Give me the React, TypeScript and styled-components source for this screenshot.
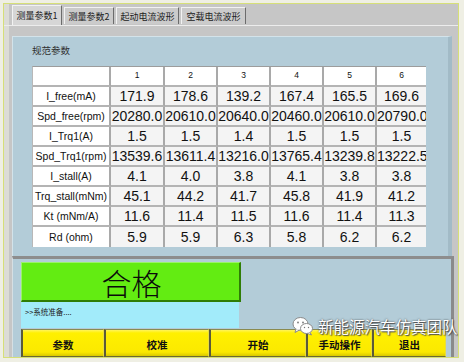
import styled, { createGlobalStyle } from "styled-components";

const GlobalStyle = createGlobalStyle`
  html, body {
    margin: 0;
    padding: 0;
    background: #efefe4;
  }
  body {
    width: 464px;
    height: 362px;
    overflow: hidden;
    font-family: "Liberation Sans", "Noto Sans CJK SC", sans-serif;
  }
`;

const Page = styled.div`
  position: relative;
  width: 464px;
  height: 362px;
  padding: 3px 0 0 3px;
  box-sizing: border-box;
`;

const Frame = styled.div`
  width: 456px;
  height: 355px;
  box-sizing: border-box;
  border: 1px solid #d6df78;
  background: linear-gradient(to right, #dcdcd6 0 5px, #c6c6c6 5px);
  display: flex;
  flex-direction: column;
`;

const TabBar = styled.div`
  height: 21px;
  padding-left: 8px;
  display: flex;
  align-items: flex-end;
  gap: 2px;
`;

const Tab = styled.div<{ $active?: boolean; $w: number }>`
  width: ${(p) => p.$w}px;
  height: ${(p) => (p.$active ? 20 : 17)}px;
  box-sizing: border-box;
  margin-bottom: ${(p) => (p.$active ? 0 : 1)}px;
  background: ${(p) => (p.$active ? "#d6d6d6" : "#cbcbcb")};
  border-top: 1px solid #f2f2f2;
  border-left: 1px solid #f2f2f2;
  border-right: 1px solid #6c6c6c;
  display: flex;
  align-items: center;
  justify-content: center;
  font-family: "Noto Sans CJK SC", sans-serif;
  font-size: 9px;
  color: #202020;
  white-space: nowrap;
`;

const TabBody = styled.div`
  border-top: 1px solid #ececec;
  padding: 10px 6px 0 8px;
`;

const BluePanel = styled.div`
  height: 220px;
  box-sizing: border-box;
  background: #b3ccd8;
  border-top: 1px solid #d3e3ea;
  border-left: 1px solid #d3e3ea;
  border-right: 4px solid #a2bbc7;
  padding: 6px 0 0 19px;
`;

const Caption = styled.div`
  font-family: "Noto Sans CJK SC", sans-serif;
  font-size: 9.5px;
  line-height: 14px;
  color: #303030;
  margin-bottom: 9px;
`;

const Grid = styled.div`
  display: grid;
  grid-template-columns: 78px 54px 53px 53px 53px 53px 49px;
  grid-template-rows: 20px repeat(8, 20px);
  width: 394px;
  box-sizing: border-box;
  border-top: 1px solid #9c9c9c;
  border-left: 1px solid #b8b8b8;
`;

const Cell = styled.div<{ $kind: "head" | "label" | "data"; $lastCol?: boolean; $lastRow?: boolean }>`
  box-sizing: border-box;
  overflow: hidden;
  white-space: nowrap;
  display: flex;
  align-items: ${(p) => (p.$kind === "head" ? "flex-start" : "center")};
  justify-content: safe center;
  padding-top: ${(p) => (p.$kind === "head" ? 3 : 0)}px;
  background: ${(p) => (p.$kind === "data" ? "#f4f4f4" : "#ffffff")};
  border-right: ${(p) => (p.$lastCol ? "none" : "2px solid #a9a9a9")};
  border-bottom: ${(p) => (p.$lastRow ? "none" : "2px solid #b4b4b4")};
  color: #111;
  font-size: ${(p) => (p.$kind === "data" ? 14 : p.$kind === "label" ? 10.5 : 8.5)}px;
`;

const LowerArea = styled.div`
  flex: 1;
  border-top: 3px solid #8d8d8d;
  margin-left: 8px;
  margin-right: 4px;
  background: #b3ccd8;
  border-left: 1px solid #d6dfe3;
  border-right: 3px solid #8a8a8a;
  padding: 3px 0 0 8px;
  display: flex;
  flex-direction: column;
  align-items: flex-start;
`;

const ResultBox = styled.div`
  width: 220px;
  height: 40px;
  box-sizing: border-box;
  background: #63ec12;
  border-top: 1px solid #9af36a;
  border-left: 1px solid #9af36a;
  border-right: 2px solid #2f7d06;
  border-bottom: 2px solid #2f7d06;
  display: flex;
  align-items: center;
  justify-content: center;
  font-family: "Noto Sans CJK SC", sans-serif;
  font-size: 30px;
  font-weight: 300;
  color: #0a0a0a;
  padding-left: 2px;
`;

const StatusBox = styled.div`
  width: 218px;
  height: 26px;
  box-sizing: border-box;
  background: #a2ebfa;
  padding: 5px 0 0 4px;
  font-family: "Noto Sans CJK SC", sans-serif;
  font-size: 7.5px;
  line-height: 10px;
  color: #222;
`;

const ButtonRow = styled.div`
  display: flex;
  margin-top: 1px;
  height: 28px;
`;

const Button = styled.div<{ $w: number }>`
  width: ${(p) => p.$w}px;
  box-sizing: border-box;
  background: linear-gradient(#fff45c 0, #fff000 3px, #fbe900 85%, #d9c800 100%);
  border-top: 1px solid #8a8a50;
  border-left: 2px solid #5a5a3a;
  border-right: 1px solid #e8dc40;
  border-bottom: 1px solid #6a6a30;
  display: flex;
  align-items: center;
  justify-content: center;
  padding-top: 3px;
  font-family: "Noto Sans CJK SC", sans-serif;
  font-size: 10.5px;
  font-weight: 700;
  color: #111;
`;

const Watermark = styled.div`
  position: absolute;
  left: 292px;
  top: 315px;
  display: flex;
  align-items: center;
  gap: 4px;
  font-family: "Noto Sans CJK SC", sans-serif;
  font-size: 15.5px;
  color: #ffffff;
  text-shadow: 0 0 2px #3a3a3a, 1px 1px 1px #555;
  white-space: nowrap;
`;

const tabs = [
  { label: "测量参数1", w: 50, active: true },
  { label: "测量参数2", w: 50 },
  { label: "起动电流波形", w: 63 },
  { label: "空载电流波形", w: 65 },
];

const rows: [string, string[]][] = [
  ["I_free(mA)", ["171.9", "178.6", "139.2", "167.4", "165.5", "169.6"]],
  ["Spd_free(rpm)", ["20280.0", "20610.0", "20640.0", "20460.0", "20610.0", "20790.0"]],
  ["I_Trq1(A)", ["1.5", "1.5", "1.4", "1.5", "1.5", "1.5"]],
  ["Spd_Trq1(rpm)", ["13539.6", "13611.4", "13216.0", "13765.4", "13239.8", "13222.5"]],
  ["I_stall(A)", ["4.1", "4.0", "3.8", "4.1", "3.8", "3.8"]],
  ["Trq_stall(mNm)", ["45.1", "44.2", "41.7", "45.8", "41.9", "41.2"]],
  ["Kt (mNm/A)", ["11.6", "11.4", "11.5", "11.6", "11.4", "11.3"]],
  ["Rd (ohm)", ["5.9", "5.9", "6.3", "5.8", "6.2", "6.2"]],
];

const buttons = [
  { label: "参数", w: 83 },
  { label: "校准", w: 105 },
  { label: "开始", w: 97 },
  { label: "手动操作", w: 66 },
  { label: "退出", w: 74 },
];

const WeChatIcon = () => (
  <svg width="22" height="20" viewBox="0 0 22 20">
    <ellipse cx="8.5" cy="8" rx="7.5" ry="6.5" fill="#fff" stroke="#8a8a8a" strokeWidth="1" />
    <path d="M4 13 L3 16.5 L7.5 14" fill="#fff" stroke="#8a8a8a" strokeWidth="1" />
    <ellipse cx="14.5" cy="12.5" rx="6" ry="5" fill="#fff" stroke="#8a8a8a" strokeWidth="1" />
    <path d="M18 16.5 L19.5 19 L15.5 17.4" fill="#fff" stroke="#8a8a8a" strokeWidth="1" />
    <circle cx="6" cy="6.5" r="0.9" fill="#777" />
    <circle cx="11" cy="6.5" r="0.9" fill="#777" />
    <circle cx="12.5" cy="11.5" r="0.7" fill="#777" />
    <circle cx="16.5" cy="11.5" r="0.7" fill="#777" />
  </svg>
);

const App = () => {
  return (
    <Page>
      <GlobalStyle />
      <Frame>
        <TabBar>
          {tabs.map((t) => (
            <Tab key={t.label} $w={t.w} $active={t.active}>
              {t.label}
            </Tab>
          ))}
        </TabBar>
        <TabBody>
          <BluePanel>
            <Caption>规范参数</Caption>
            <Grid>
              <Cell $kind="head" />
              {[1, 2, 3, 4, 5, 6].map((n) => (
                <Cell key={n} $kind="head" $lastCol={n === 6}>
                  {n}
                </Cell>
              ))}
              {rows.flatMap(([label, values], ri) => [
                <Cell key={label} $kind="label" $lastRow={ri === rows.length - 1}>
                  {label}
                </Cell>,
                ...values.map((v, ci) => (
                  <Cell
                    key={label + ci}
                    $kind="data"
                    $lastCol={ci === 5}
                    $lastRow={ri === rows.length - 1}
                  >
                    {v}
                  </Cell>
                )),
              ])}
            </Grid>
          </BluePanel>
        </TabBody>
        <LowerArea>
          <ResultBox>合格</ResultBox>
          <StatusBox>&gt;&gt;系统准备....</StatusBox>
          <ButtonRow>
            {buttons.map((b) => (
              <Button key={b.label} $w={b.w}>
                {b.label}
              </Button>
            ))}
          </ButtonRow>
        </LowerArea>
      </Frame>
      <Watermark>
        <WeChatIcon />
        <span>新能源汽车仿真团队</span>
      </Watermark>
    </Page>
  );
};

export default App;
